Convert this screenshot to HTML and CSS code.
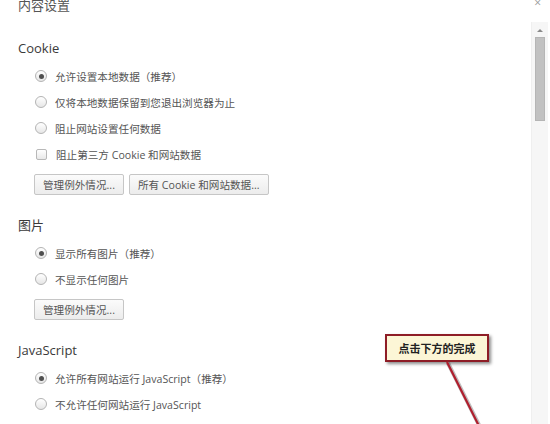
FILE: index.html
```html
<!DOCTYPE html>
<html lang="zh-CN">
<head>
<meta charset="utf-8">
<title>内容设置</title>
<link rel="stylesheet" href="styles.css">
</head>
<body>
<div class="window">
  <header class="header">
    <h1 class="title">内容设置</h1>
    <span class="close">×</span>
  </header>
  <div class="main">
    <div class="content">
      <section class="section">
        <h2 class="heading">Cookie</h2>
        <div class="row"><span class="radio checked"></span><span class="label">允许设置本地数据（推荐）</span></div>
        <div class="row"><span class="radio"></span><span class="label">仅将本地数据保留到您退出浏览器为止</span></div>
        <div class="row"><span class="radio"></span><span class="label">阻止网站设置任何数据</span></div>
        <div class="row"><span class="checkbox"></span><span class="label">阻止第三方 Cookie 和网站数据</span></div>
        <div class="buttons"><button class="btn">管理例外情况...</button><button class="btn">所有 Cookie 和网站数据...</button></div>
      </section>
      <section class="section">
        <h2 class="heading">图片</h2>
        <div class="row"><span class="radio checked"></span><span class="label">显示所有图片（推荐）</span></div>
        <div class="row"><span class="radio"></span><span class="label">不显示任何图片</span></div>
        <div class="buttons"><button class="btn">管理例外情况...</button></div>
      </section>
      <section class="section">
        <h2 class="heading">JavaScript</h2>
        <div class="row"><span class="radio checked"></span><span class="label">允许所有网站运行 JavaScript（推荐）</span></div>
        <div class="row"><span class="radio"></span><span class="label">不允许任何网站运行 JavaScript</span></div>
      </section>
    </div>
    <aside class="scrollbar">
      <span class="arrow-up"></span>
      <span class="thumb"></span>
    </aside>
  </div>
  <div class="callout">点击下方的完成</div>
  <svg class="pointer" width="60" height="70" viewBox="0 0 60 70">
    <line x1="8" y1="2" x2="40" y2="66" stroke="rgba(0,0,0,0.25)" stroke-width="4"/>
    <line x1="7" y1="1" x2="39" y2="65" stroke="#b01f2e" stroke-width="2.2"/>
  </svg>
</div>
</body>
</html>
```

FILE: styles.css
```css
html, body {
  margin: 0;
  padding: 0;
  background: #ffffff;
}
body {
  width: 550px;
  height: 424px;
  overflow: hidden;
  font-family: "Open Sans", "Noto Sans CJK SC", sans-serif;
  color: #444;
}
.window {
  position: relative;
  width: 550px;
  height: 424px;
}
.header {
  height: 22px;
  display: flex;
  justify-content: space-between;
  align-items: flex-start;
  padding: 0 9px 0 18px;
}
.title {
  margin: 0;
  font-size: 13px;
  font-weight: normal;
  line-height: 10px;
  color: #555;
}
.close {
  font-size: 12px;
  line-height: 6px;
  color: #999;
}
.main {
  display: flex;
  height: 402px;
}
.content {
  flex: 1;
  padding: 17px 0 0 18px;
}
.section + .section {
  margin-top: 21px;
}
.heading {
  margin: 0 0 6px;
  font-size: 13px;
  font-weight: normal;
  line-height: 18px;
  color: #3a3a3a;
}
.row {
  display: flex;
  align-items: center;
  height: 26px;
  padding-left: 17px;
}
.radio {
  box-sizing: border-box;
  width: 12px;
  height: 12px;
  border-radius: 50%;
  border: 1px solid #b4b4b4;
  background: linear-gradient(#ffffff, #e6e6e6);
  margin-right: 8px;
  display: flex;
  align-items: center;
  justify-content: center;
  flex: none;
}
.radio.checked::after {
  content: "";
  width: 5px;
  height: 5px;
  border-radius: 50%;
  background: #4f4f4f;
}
.checkbox {
  box-sizing: border-box;
  width: 11px;
  height: 11px;
  border: 1px solid #b8b8b8;
  border-radius: 2px;
  background: linear-gradient(#ffffff, #e8e8e8);
  margin: 0 9px 0 1px;
  flex: none;
}
.label {
  font-size: 10.6px;
  color: #555;
  white-space: nowrap;
}
.buttons {
  display: flex;
  gap: 5px;
  margin-top: 7px;
  padding-left: 16px;
}
.btn {
  height: 21px;
  padding: 0 8px;
  border: 1px solid #c6c6c6;
  border-radius: 2px;
  background: linear-gradient(#fbfbfb, #ececec);
  font-family: "Open Sans", "Noto Sans CJK SC", sans-serif;
  font-size: 10.6px;
  color: #555;
  white-space: nowrap;
}
.scrollbar {
  position: relative;
  width: 17px;
  margin-right: 2px;
  background: #f6f6f6;
  border-left: 1px solid #efefef;
  box-sizing: border-box;
  display: flex;
  flex-direction: column;
  align-items: center;
}
.arrow-up {
  margin-top: 7px;
  width: 0;
  height: 0;
  border-left: 3px solid transparent;
  border-right: 3px solid transparent;
  border-bottom: 3px solid #8a8a8a;
}
.thumb {
  margin-top: 5px;
  width: 10px;
  height: 84px;
  background: #c1c1c1;
  border: 1px solid #b5b5b5;
  box-sizing: border-box;
}
.callout {
  position: absolute;
  left: 385px;
  top: 334px;
  width: 104px;
  height: 28px;
  box-sizing: border-box;
  border: 2px solid #8e1d26;
  background: #fcf6d6;
  box-shadow: 2px 2px 3px rgba(0, 0, 0, 0.45);
  display: flex;
  align-items: center;
  justify-content: center;
  font-family: "Noto Sans CJK SC", sans-serif;
  font-size: 11px;
  font-weight: bold;
  color: #222;
}
.pointer {
  position: absolute;
  left: 440px;
  top: 361px;
}
```
